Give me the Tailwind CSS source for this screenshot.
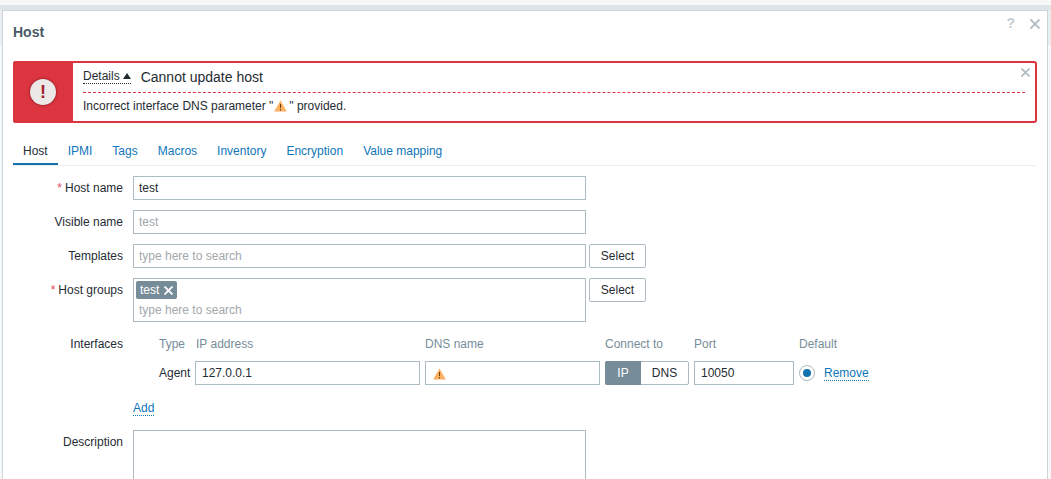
<!DOCTYPE html>
<html>
    <head>
        <meta charset="UTF-8" />
        <title>Host</title>
        <script src="https://cdn.jsdelivr.net/npm/@tailwindcss/browser@4"></script>
    </head>
    <body class="relative w-[1051px] h-[479px] overflow-hidden bg-[#f7f8f9] font-['Liberation_Sans',Arial,sans-serif] text-[12px] text-[#1f2c33]">
        <div class="h-[5px] bg-[#f6f7f7]"></div>
        <div class="h-[5px] bg-[#dfe4e6]"></div>
        <!-- page header peeking out behind the dialog -->
        <div class="absolute top-[10px] left-0 w-full h-[35px] bg-[#ebeef0]"></div>
        <!-- dialog -->
        <div class="relative ml-[2px] w-[1046px] h-[469px] bg-white border border-b-0 border-[#ccd5d9] pl-[10px] pr-[9px] overflow-hidden">
            <div class="absolute top-[4px] right-[32px] text-[14px] leading-[16px] font-bold text-[#c3cdd2]">?</div>
            <svg class="absolute top-[8px] right-[7px]" width="10" height="10" viewBox="0 0 10 10"><path d="M0.5 0.5L9.5 9.5M9.5 0.5L0.5 9.5" stroke="#aebbc2" stroke-width="1.8" /></svg>

            <h4 class="h-[50px] pt-[13px] text-[14px] leading-[16px] font-bold text-[#4a5a66]">Host</h4>

            <!-- error message -->
            <div class="relative flex w-[1024px] h-[62px] border-[2px] border-[#dc3540] rounded-[3px]">
                <div class="w-[60px] -ml-[2px] -my-[2px] h-[62px] bg-[#dc3540] rounded-l-[3px] flex items-center justify-center shrink-0">
                    <div class="w-[26px] h-[26px] rounded-full bg-[#ece8e8] shadow-[0_0_3px_rgba(90,0,10,0.8)] flex items-center justify-center text-[#a5202c] text-[18px] leading-none font-bold">!</div>
                </div>
                <div class="flex-1 pl-[10px] pr-[10px]">
                    <div class="flex items-center h-[30px] border-b border-dashed border-[#dc3540] pb-[2px]">
                        <span class="inline-flex items-center gap-[3px] border-b border-dotted border-[#1f2c33] leading-[14px]">Details
                            <svg width="8" height="6" viewBox="0 0 8 6"><path d="M4 0L8 6H0Z" fill="#1f2c33" /></svg>
                        </span>
                        <span class="ml-[10px] mt-[1px] text-[14px]">Cannot update host</span>
                    </div>
                    <div class="pt-[5px] leading-[16px] flex items-center">Incorrect interface DNS parameter "<svg class="ml-[1px] mr-[2px]" width="13" height="12" viewBox="0 0 13 12"><path d="M6.5 0.5L12.8 11.5H0.2Z" fill="#fbb060" /><path d="M6.5 4V8M6.5 9V10.4" stroke="#6b3d10" stroke-width="1" /></svg>" provided.</div>
                </div>
                <svg class="absolute top-[5px] right-[5px]" width="9" height="9" viewBox="0 0 9 9"><path d="M0.5 0.5L8.5 8.5M8.5 0.5L0.5 8.5" stroke="#aebbc2" stroke-width="1.6" /></svg>
            </div>

            <!-- tabs -->
            <div class="flex mt-[15px] w-[1023px] h-[28px] border-b border-[#ebeef0] text-[#0f76b8]">
                <div class="px-[10px] pt-[4px] h-[27px] border-b-[2px] border-[#1272b0] text-[#1f2c33]">Host</div>
                <div class="px-[10px] pt-[4px]">IPMI</div>
                <div class="px-[10px] pt-[4px]">Tags</div>
                <div class="px-[10px] pt-[4px]">Macros</div>
                <div class="px-[10px] pt-[4px]">Inventory</div>
                <div class="px-[10px] pt-[4px]">Encryption</div>
                <div class="px-[10px] pt-[4px]">Value mapping</div>
            </div>

            <!-- form -->
            <div class="flex flex-col gap-[10px] mt-[10px]">
                <div class="flex items-center h-[24px]">
                    <div class="w-[110px] text-right"><span class="text-[#e3485a] mr-[3px]">*</span>Host name</div>
                    <div class="ml-[10px] w-[453px] h-[24px] border border-[#acbbc2] px-[5px] leading-[22px]">test</div>
                </div>
                <div class="flex items-center h-[24px]">
                    <div class="w-[110px] text-right">Visible name</div>
                    <div class="ml-[10px] w-[453px] h-[24px] border border-[#acbbc2] px-[5px] leading-[22px] text-[#a2a8ac]">test</div>
                </div>
                <div class="flex items-center h-[24px]">
                    <div class="w-[110px] text-right">Templates</div>
                    <div class="ml-[10px] w-[453px] h-[24px] border border-[#acbbc2] px-[5px] leading-[22px] text-[#a2a8ac]">type here to search</div>
                    <div class="ml-[3px] w-[57px] h-[24px] border border-[#acbbc2] rounded-[2px] text-center leading-[22px]">Select</div>
                </div>
                <div class="flex items-start h-[44px]">
                    <div class="w-[110px] text-right pt-[4px] leading-[16px]"><span class="text-[#e3485a] mr-[3px]">*</span>Host groups</div>
                    <div class="ml-[10px] w-[453px] h-[44px] border border-[#acbbc2] px-[2px] pt-[2px]">
                        <div class="flex w-fit items-center h-[18px] pl-[4px] pr-[4px] gap-[5px] bg-[#768d99] rounded-[2px] text-white">test
                            <svg width="9" height="9" viewBox="0 0 9 9"><path d="M0.5 0.5L8.5 8.5M8.5 0.5L0.5 8.5" stroke="#fff" stroke-width="1.8" /></svg>
                        </div>
                        <div class="pl-[3px] pt-[3px] leading-[16px] text-[#a2a8ac]">type here to search</div>
                    </div>
                    <div class="ml-[3px] w-[57px] h-[24px] border border-[#acbbc2] rounded-[2px] text-center leading-[22px]">Select</div>
                </div>

                <!-- interfaces -->
                <div class="flex items-start mt-[2px]">
                    <div class="w-[110px] text-right leading-[16px] pt-[2px]">Interfaces</div>
                    <div class="ml-[10px]">
                        <div class="flex h-[20px] items-center text-[#768d99] pl-[26px]">
                            <div class="w-[37px]">Type</div>
                            <div class="w-[229px]">IP address</div>
                            <div class="w-[180px]">DNS name</div>
                            <div class="w-[89px]">Connect to</div>
                            <div class="w-[105px]">Port</div>
                            <div>Default</div>
                        </div>
                        <div class="flex items-center h-[24px] mt-[7px] pl-[26px]">
                            <div class="w-[36px]">Agent</div>
                            <div class="w-[225px] h-[24px] border border-[#acbbc2] px-[6px] leading-[22px]">127.0.0.1</div>
                            <div class="ml-[5px] w-[175px] h-[24px] border border-[#acbbc2] px-[7px] flex items-center">
                                <svg class="mt-[2px]" width="13" height="12" viewBox="0 0 13 12"><path d="M6.5 0.5L12.8 11.5H0.2Z" fill="#fbb060" /><path d="M6.5 4V8M6.5 9V10.4" stroke="#6b3d10" stroke-width="1" /></svg>
                            </div>
                            <div class="ml-[5px] w-[84px] h-[24px] flex border border-[#acbbc2] rounded-[2px] leading-[22px] text-center">
                                <div class="w-[36px] -my-px -ml-px h-[24px] leading-[24px] bg-[#768d99] text-white rounded-l-[2px]">IP</div>
                                <div class="flex-1">DNS</div>
                            </div>
                            <div class="ml-[5px] w-[100px] h-[24px] border border-[#acbbc2] px-[6px] leading-[22px]">10050</div>
                            <div class="ml-[5px] w-[16px] h-[16px] rounded-full border border-[#acbbc2] flex items-center justify-center">
                                <div class="w-[8px] h-[8px] rounded-full bg-[#1272b0]"></div>
                            </div>
                            <div class="ml-[9px] text-[#0f76b8] border-b border-dotted border-[#0f76b8] leading-[14px]">Remove</div>
                        </div>
                        <div class="mt-[14px] h-[14px]">
                            <span class="inline-block text-[#0f76b8] border-b border-dotted border-[#0f76b8] leading-[14px]">Add</span>
                        </div>
                    </div>
                </div>

                <div class="flex items-start mt-[7px]">
                    <div class="w-[110px] text-right leading-[16px] pt-[4px]">Description</div>
                    <div class="ml-[10px] w-[453px] h-[80px] border border-[#acbbc2]"></div>
                </div>
            </div>
        </div>
    </body>
</html>
